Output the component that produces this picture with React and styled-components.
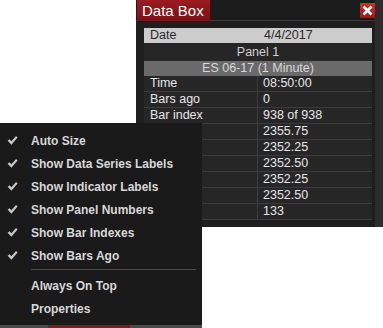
import React from 'react'
import styled, { createGlobalStyle } from 'styled-components'

const GlobalStyle = createGlobalStyle`
    html, body {
        margin: 0;
        padding: 0;
        background: #ffffff;
        font-family: "Liberation Sans", Arial, sans-serif;
    }
`

const rows = [
    ['Time', '08:50:00'],
    ['Bars ago', '0'],
    ['Bar index', '938 of 938'],
    ['', '2355.75'],
    ['', '2352.25'],
    ['', '2352.50'],
    ['', '2352.25'],
    ['', '2352.50'],
    ['', '133'],
]

const menuItems = [
    { label: 'Auto Size', checked: true },
    { label: 'Show Data Series Labels', checked: true },
    { label: 'Show Indicator Labels', checked: true },
    { label: 'Show Panel Numbers', checked: true },
    { label: 'Show Bar Indexes', checked: true },
    { label: 'Show Bars Ago', checked: true },
    { separator: true },
    { label: 'Always On Top' },
    { label: 'Properties' },
]

function Check() {
    return (
        <svg width="11" height="11" viewBox="0 0 10 10">
            <path d="M0.6 5.3 L2.3 3.8 L4 5.7 L8.2 0.8 L9.6 2.2 L4 8.9 Z" fill="#c8c8c8" />
        </svg>
    )
}

function App() {
    return (
        <Desktop>
            <GlobalStyle />

            <Window>
                <TitleBar>
                    <TitleTab>Data Box</TitleTab>
                    <CloseButton>
                        <svg width="11" height="11" viewBox="0 0 11 11">
                            <path d="M1.5 1.5 L9.5 9.5 M9.5 1.5 L1.5 9.5" stroke="#ffffff" strokeWidth="2.6" />
                        </svg>
                    </CloseButton>
                </TitleBar>

                <Body>
                    <Table>
                        <DateRow>
                            <Cell>Date</Cell>
                            <Cell>4/4/2017</Cell>
                        </DateRow>
                        <FullRow>Panel 1</FullRow>
                        <FullRow series>ES 06-17 (1 Minute)</FullRow>
                        {rows.map(([label, value], i) => (
                            <Row key={i}>
                                <Cell>{label}</Cell>
                                <Cell value>{value}</Cell>
                            </Row>
                        ))}
                    </Table>
                </Body>
            </Window>

            <Menu>
                {menuItems.map((item, i) =>
                    item.separator ? (
                        <Separator key={i} />
                    ) : (
                        <MenuItem key={i}>
                            <CheckSlot>{item.checked && <Check />}</CheckSlot>
                            {item.label}
                        </MenuItem>
                    )
                )}
            </Menu>

            <Taskbar>
                <TaskbarTab />
            </Taskbar>
        </Desktop>
    )
}

export default App

const Desktop = styled.div`
    position: relative;
    width: 383px;
    height: 328px;
    overflow: hidden;
    background: #ffffff;
`

const Window = styled.div`
    position: absolute;
    left: 136px;
    top: 0;
    width: 247px;
    height: 227px;
    background: #1e1e1e;
    display: flex;
    flex-direction: column;
    box-sizing: border-box;
    border-right: 8px solid #2c2c2c;
`

const TitleBar = styled.div`
    height: 21px;
    display: flex;
    align-items: flex-start;
    justify-content: space-between;
    background: #1b1b1b;
    border-bottom: 1px solid #3a3a3a;
    box-sizing: border-box;
`

const TitleTab = styled.div`
    height: 21px;
    padding: 0 6px 0 5px;
    margin-left: 1px;
    background: linear-gradient(#9a1c20, #7a1216);
    color: #ffffff;
    font-size: 15px;
    line-height: 20px;
    display: flex;
    align-items: center;
`

const CloseButton = styled.div`
    width: 15px;
    height: 15px;
    margin: 3px 0 0 0;
    background: linear-gradient(#d82a2a, #a81414);
    display: flex;
    align-items: center;
    justify-content: center;
`

const Body = styled.div`
    flex: 1;
    padding: 7px 4px 0 8px;
    background: #1e1e1e;
`

const Table = styled.div`
    width: 228px;
    display: flex;
    flex-direction: column;
    font-size: 12.5px;
`

const Row = styled.div`
    height: 16px;
    display: grid;
    grid-template-columns: 114px 114px;
    background: #262626;
    border-bottom: 1px solid #3c3c3c;
    box-sizing: border-box;
    color: #e6e6e6;
    & > div:first-child {
        border-right: 1px solid #3c3c3c;
    }
`

const DateRow = styled(Row)`
    background: #cccccc;
    color: #2a2a2a;
    border-bottom: none;
    height: 15px;
    & > div:first-child {
        border-right: none;
    }
`

const Cell = styled.div`
    padding-left: ${props => (props.value ? '5px' : '6px')};
    line-height: 15px;
    white-space: nowrap;
    overflow: hidden;
`

const FullRow = styled.div`
    height: ${props => (props.series ? '15px' : '18px')};
    line-height: ${props => (props.series ? '15px' : '18px')};
    text-align: center;
    background: ${props => (props.series ? '#6a6a6a' : '#262626')};
    color: ${props => (props.series ? '#d8d8d8' : '#d0d0d0')};
`

const Menu = styled.div`
    position: absolute;
    left: 0;
    top: 123px;
    width: 202px;
    height: 202px;
    background: #1a1a1a;
    padding-top: 6px;
    box-sizing: border-box;
`

const MenuItem = styled.div`
    height: 23px;
    display: flex;
    align-items: center;
    color: #d8d8d8;
    font-size: 12px;
    font-weight: bold;
`

const CheckSlot = styled.div`
    width: 31px;
    padding-left: 7px;
    box-sizing: border-box;
    display: flex;
    align-items: center;
`

const Separator = styled.div`
    height: 1px;
    margin: 2px 6px 4px 31px;
    background: #4a4a4a;
`

const Taskbar = styled.div`
    position: absolute;
    left: 0;
    top: 325px;
    width: 202px;
    height: 3px;
    background: #4a4a4a;
    display: flex;
`

const TaskbarTab = styled.div`
    margin-left: 48px;
    width: 82px;
    background: #7a1c22;
`
